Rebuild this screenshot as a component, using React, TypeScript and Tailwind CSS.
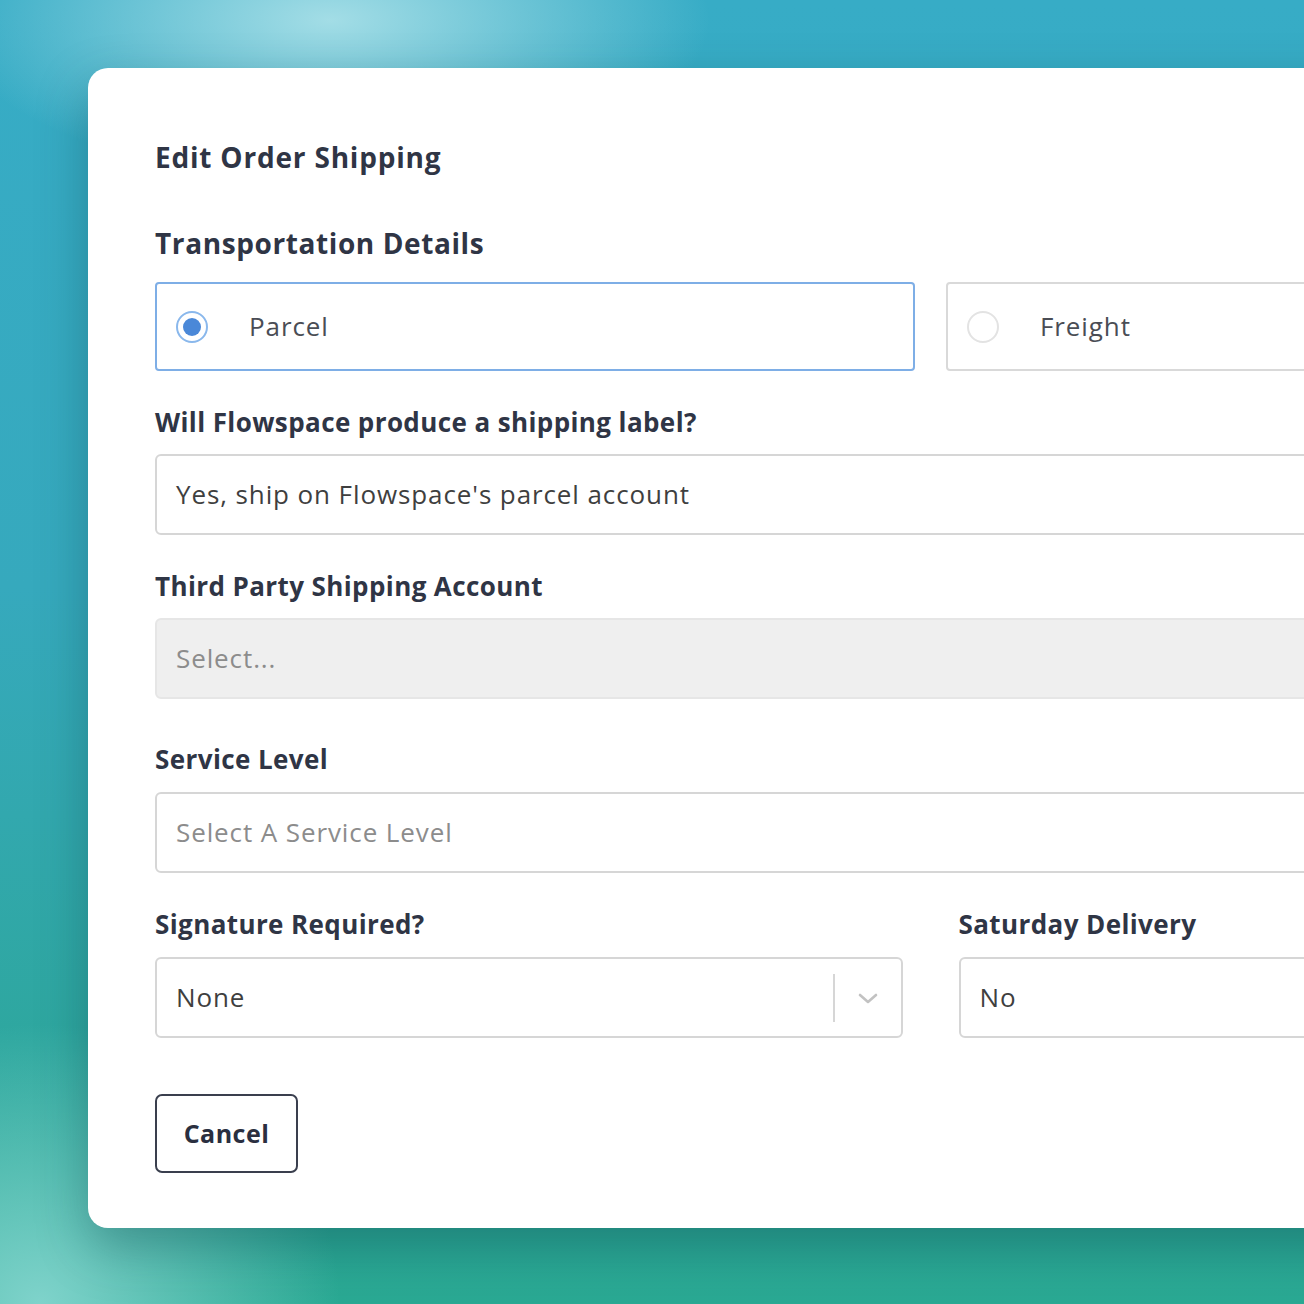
import React from "react";

function Label({ children }: { children: React.ReactNode }) {
  return (
    <div className="h-[32px] flex items-center text-[26px] font-bold text-[#2f3545] tracking-[0.4px]">
      {children}
    </div>
  );
}

function Field({
  children,
  tone = "value",
  gray = false,
}: {
  children: React.ReactNode;
  tone?: "value" | "placeholder";
  gray?: boolean;
}) {
  return (
    <div
      className={
        "h-[81px] rounded-[6px] border-2 flex items-center pl-[19px] text-[26px] tracking-[0.9px] " +
        (gray ? "bg-[#efefef] border-[#e6e6e6] " : "bg-white border-[#d6d6d6] ") +
        (tone === "placeholder" ? "text-[#8c8c8c]" : "text-[#3f3f3f]")
      }
    >
      {children}
    </div>
  );
}

export default function App() {
  return (
    <div
      className="w-[1304px] h-[1304px] overflow-hidden bg-[radial-gradient(ellipse_380px_160px_at_330px_20px,#a3dde6_0%,rgba(163,221,230,0)_100%),radial-gradient(ellipse_300px_280px_at_40px_1304px,#7fd3cb_0%,rgba(127,211,203,0)_100%),linear-gradient(180deg,#37acc6_0%,#36a9bd_45%,#2ea79f_80%,#2aa993_100%)]"
      style={{ fontFamily: "'Open Sans', Lato, sans-serif" }}
    >
      <div className="ml-[88px] mt-[68px] w-[1685px] rounded-[20px] bg-white shadow-[0_20px_50px_rgba(10,60,70,0.35)] pl-[67px] pr-[67px] pt-[71px] pb-[55px]">
        <div className="h-[36px] flex items-center text-[28px] font-bold text-[#2f3545] tracking-[0.8px]">
          Edit Order Shipping
        </div>
        <div className="mt-[50px] h-[36px] flex items-center text-[28px] font-bold text-[#2f3545] tracking-[0.6px]">
          Transportation Details
        </div>

        <div className="mt-[21px] grid grid-cols-2 gap-[31px]">
          <div className="h-[89px] rounded-[4px] border-2 border-[#7eaee6] flex items-center pl-[19px]">
            <div className="w-[32px] h-[32px] rounded-full border-2 border-[#8ab8ec] flex items-center justify-center">
              <div className="w-[18px] h-[18px] rounded-full bg-[#4a88d8]" />
            </div>
            <span className="ml-[41px] text-[26px] tracking-[0.9px] text-[#4a4d55]">Parcel</span>
          </div>
          <div className="h-[89px] rounded-[4px] border-2 border-[#d9d9d9] flex items-center pl-[19px]">
            <div className="w-[32px] h-[32px] rounded-full border-2 border-[#e3e3e3]" />
            <span className="ml-[41px] text-[26px] tracking-[0.9px] text-[#4a4d55]">Freight</span>
          </div>
        </div>

        <div className="mt-[35px]">
          <Label>Will Flowspace produce a shipping label?</Label>
        </div>
        <div className="mt-[16px]">
          <Field>Yes, ship on Flowspace's parcel account</Field>
        </div>

        <div className="mt-[35px]">
          <Label>Third Party Shipping Account</Label>
        </div>
        <div className="mt-[16px]">
          <Field tone="placeholder" gray>
            Select...
          </Field>
        </div>

        <div className="mt-[44px]">
          <Label>Service Level</Label>
        </div>
        <div className="mt-[17px]">
          <Field tone="placeholder">Select A Service Level</Field>
        </div>

        <div className="mt-[35px] grid grid-cols-2 gap-[56px]">
          <div>
            <Label>Signature Required?</Label>
            <div className="mt-[17px] h-[81px] rounded-[6px] border-2 border-[#d6d6d6] flex items-center pl-[19px] text-[26px] tracking-[0.9px] text-[#3f3f3f]">
              <span className="flex-1">None</span>
              <div className="w-[2px] h-[48px] bg-[#d6d6d6]" />
              <div className="w-[66px] flex items-center justify-center">
                <svg width="22" height="14" viewBox="0 0 22 14" fill="none">
                  <path d="M3 4l8 7 8-7" stroke="#c2c2c2" strokeWidth="2.6" strokeLinecap="round" strokeLinejoin="round" />
                </svg>
              </div>
            </div>
          </div>
          <div>
            <Label>Saturday Delivery</Label>
            <div className="mt-[17px] h-[81px] rounded-[6px] border-2 border-[#d6d6d6] flex items-center pl-[19px] text-[26px] tracking-[0.9px] text-[#3f3f3f]">
              No
            </div>
          </div>
        </div>

        <div className="mt-[56px]">
          <button className="w-[143px] h-[79px] rounded-[7px] border-[2.5px] border-[#3a3f4e] bg-white text-[25px] font-bold tracking-[0.5px] text-[#2a2f40] flex items-center justify-center">
            Cancel
          </button>
        </div>
      </div>
    </div>
  );
}
